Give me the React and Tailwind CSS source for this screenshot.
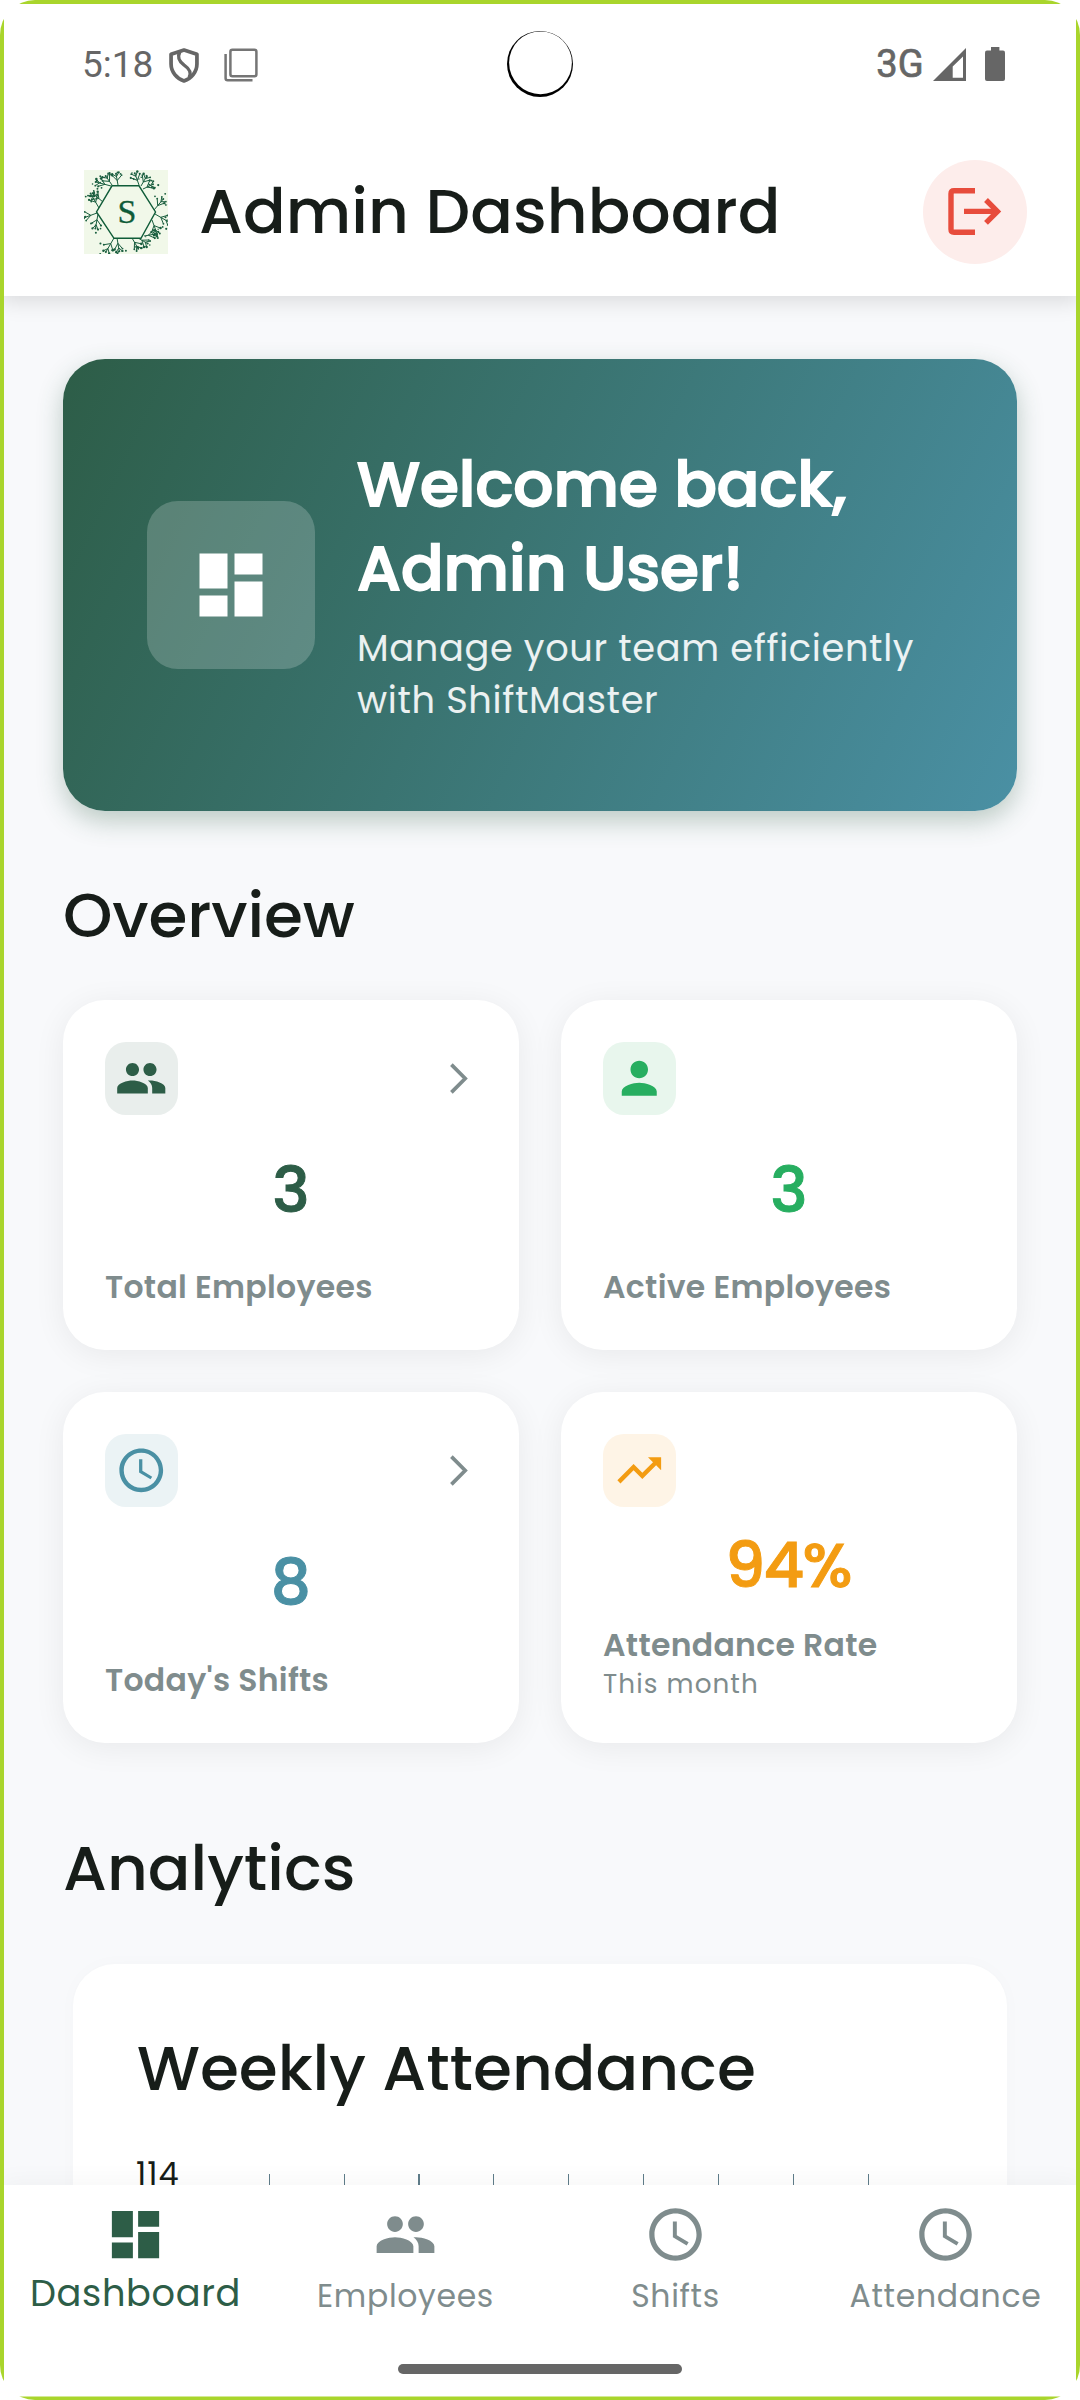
import React from 'react';
import { MdDashboard, MdPeople, MdPerson, MdTrendingUp, MdAccessTime } from 'react-icons/md';

function ShieldIcon() {
  return (
    <svg width="30" height="35" viewBox="0 0 29 35" preserveAspectRatio="none" fill="none" stroke="#666666" strokeWidth="3.6">
      <path d="M14.5 2 L27 6.3 V16 C27 24 21.5 30.5 14.5 33 C7.5 30.5 2 24 2 16 V6.3 Z" strokeLinejoin="round" />
      <path d="M10.5 3.5 C7.5 10 10 13.5 14.5 17 C20 21 22 24.5 19.5 29.5" strokeWidth="3.4" />
    </svg>
  );
}

function StackIcon() {
  return (
    <svg width="34" height="34" viewBox="0 0 34 34" fill="none" stroke="#757575" strokeWidth="2.5">
      <rect x="6.4" y="1.8" width="26" height="26.4" rx="2" />
      <path d="M1.6 6 V30.2 Q1.6 32.2 3.6 32.2 H28.5" />
    </svg>
  );
}

function SignalIcon() {
  return (
    <svg width="33" height="33" viewBox="0 0 33 33" fill="#666666" fillRule="evenodd">
      <path d="M0 33 L33 0 V33 Z M19.7 18.5 V29.7 H30 V8.4 Z" />
    </svg>
  );
}

function BatteryIcon() {
  return (
    <svg width="20" height="34" viewBox="0 0 20 34" fill="#666666">
      <rect x="6" y="0" width="8.4" height="5" />
      <rect x="0" y="3.4" width="20" height="30.6" rx="2" />
    </svg>
  );
}

function LogoutIcon() {
  return (
    <svg width="54" height="48" viewBox="0 0 54 48" fill="none" stroke="#E74C3C" strokeWidth="5.4">
      <path d="M27 2.7 H6 Q3 2.7 3 5.7 V41.3 Q3 44.3 6 44.3 H27" />
      <path d="M16 23.4 H49" />
      <path d="M38 12 L49.4 23.4 L38 34.8" />
    </svg>
  );
}

function ChevronIcon() {
  return (
    <svg className="mr-[9px]" width="18" height="31" viewBox="0 0 18 31" fill="none" stroke="#7F8C8D" strokeWidth="3.7">
      <path d="M1.4 1.6 L15.2 15.5 L1.4 29.4" />
    </svg>
  );
}

/* Leafy wreath around the hexagon of the brand mark. */
function wreath() {
  const twigs = [];
  const dots = [];
  let seed = 7;
  const rand = () => {
    seed = (seed * 16807) % 2147483647;
    return seed / 2147483647;
  };
  const roots = [
    [28, 15, -125], [27, 16, -165], [34, 15, -100], [55, 15, -110], [57, 16, -60], [59, 19, -25],
    [70, 40, -50], [71, 44, 30], [68, 50, 70], [60, 66, -10], [54, 68, 30],
    [48, 68, 60], [33, 68, 80], [30, 68, 120], [14, 44, 100],
    [13, 43, 160], [15, 38, -120], [19, 32, -140],
  ];
  roots.forEach(([x, y, deg]) => {
    const a = (deg * Math.PI) / 180;
    const len = 11 + rand() * 6;
    const ex = x + Math.cos(a) * len;
    const ey = y + Math.sin(a) * len;
    twigs.push(`M${x} ${y}L${ex.toFixed(1)} ${ey.toFixed(1)}`);
    dots.push([ex, ey, 1]);
    [0.4, 0.75].forEach((t, i) => {
      [-1, 1].forEach((side) => {
        const b = a + side * (0.5 + rand() * 0.4);
        const l = 7 - i * 2;
        const sx = x + Math.cos(a) * len * t;
        const sy = y + Math.sin(a) * len * t;
        const tx = sx + Math.cos(b) * l;
        const ty = sy + Math.sin(b) * l;
        twigs.push(`M${sx.toFixed(1)} ${sy.toFixed(1)}L${tx.toFixed(1)} ${ty.toFixed(1)}`);
        dots.push([tx, ty, 0.8 + rand() * 0.5]);
        dots.push([tx + rand() * 8 - 4, ty + rand() * 8 - 4, 0.6 + rand() * 0.5]);
      });
    });
  });
  return { twigs: twigs.join(''), dots };
}
const WREATH = wreath();

function BrandMark() {
  return (
    <svg width="84" height="84" viewBox="0 0 84 84">
      <rect width="84" height="84" fill="#F1F8E9" />
      <path d={WREATH.twigs} stroke="#1A5E3F" strokeWidth="1" fill="none" />
      {WREATH.dots.map(([x, y, r], i) => (
        <circle key={i} cx={x} cy={y} r={r} fill="#1A5E3F" />
      ))}
      <path d="M28 15.8 H55 L71.5 42 L57 68.3 H30 L12.5 42 Z" fill="#F1F8E9" stroke="#0F5C38" strokeWidth="1.4" />
      <text x="43" y="53" textAnchor="middle" fontSize="34" fill="#0F5C38" className="font-['Liberation_Serif',serif]" stroke="#0F5C38" strokeWidth="0.3">S</text>
    </svg>
  );
}

function StatusBar() {
  return (
    <div className="relative flex h-[128px] shrink-0 items-center justify-between pr-[75px] pl-[82px] text-[#666666]">
      <div className="flex items-center pt-px font-['Roboto',sans-serif]">
        <span className="text-[37px] leading-[43px]">5:18</span>
        <span className="ml-[16px] pt-[2px]"><ShieldIcon /></span>
        <span className="ml-[25px]"><StackIcon /></span>
      </div>
      <div className="flex items-center font-['Roboto',sans-serif]">
        <span className="text-[38px] leading-[43px] tracking-[0.3px] [-webkit-text-stroke:0.7px_#666666]">3G</span>
        <span className="ml-[9px]"><SignalIcon /></span>
        <span className="ml-[19px]"><BatteryIcon /></span>
      </div>
      <svg className="absolute top-[31px] left-[507px]" width="66" height="66" viewBox="0 0 66 66">
        <circle cx="33" cy="33" r="33" fill="#000000" />
        <circle cx="33.5" cy="31.8" r="31.4" fill="#ffffff" />
      </svg>
    </div>
  );
}

function Header() {
  return (
    <header className="flex h-[168px] shrink-0 items-center pr-[53px] pl-[84px]">
      <BrandMark />
      <h1 className="ml-[31px] flex-1 pb-[2px] text-[63px] leading-[84px] font-medium tracking-[0.08px] text-[#171D19]">Admin Dashboard</h1>
      <button className="flex size-[104px] items-center justify-center rounded-full bg-[#FDEDEB]">
        <LogoutIcon />
      </button>
    </header>
  );
}

function Hero() {
  return (
    <section className="flex h-[452px] items-center rounded-[42px] bg-[linear-gradient(115.35deg,#2D5D47,#4A90A4)] pl-[84px] shadow-[0_10px_26px_rgba(47,93,71,0.3)]">
      <div className="flex size-[168px] shrink-0 items-center justify-center rounded-[31px] bg-white/20 text-[84px] text-white">
        <MdDashboard />
      </div>
      <div className="mb-[2px] ml-[42px]">
        <h2 className="text-[63px] leading-[84px] font-medium text-white [-webkit-text-stroke:1.8px_white]">Welcome back,<br />Admin User!</h2>
        <p className="mt-[12px] text-[36.75px] leading-[52px] tracking-[0.65px] text-white/90">Manage your team efficiently<br />with ShiftMaster</p>
      </div>
    </section>
  );
}

const STATS = [
  { icon: MdPeople, value: '3', label: 'Total Employees', tone: 'text-[#2D5D47]', tint: 'bg-[#E9EEEC]', link: true },
  { icon: MdPerson, value: '3', label: 'Active Employees', tone: 'text-[#27AE60]', tint: 'bg-[#E8F6ED]' },
  { icon: MdAccessTime, value: '8', label: "Today's Shifts", tone: 'text-[#4A90A4]', tint: 'bg-[#EBF3F5]', link: true },
  { icon: MdTrendingUp, value: '94%', label: 'Attendance Rate', note: 'This month', tone: 'text-[#F39C12]', tint: 'bg-[#FEF4E6]' },
];

function StatCard({ icon: Icon, value, label, note, tone, tint, link }) {
  return (
    <article className="flex flex-col justify-between rounded-[42px] bg-white p-[42px] shadow-[0_5px_32px_rgba(0,0,0,0.065)]">
      <div className="flex items-center justify-between">
        <div className={`flex size-[73px] items-center justify-center rounded-[21px] text-[52.5px] ${tint} ${tone}`}>
          <Icon />
        </div>
        {link && <ChevronIcon />}
      </div>
      <div className={`mb-[2px] pr-[2px] text-center text-[63px] leading-[84px] font-medium tracking-[-1.8px] [-webkit-text-stroke:1px_currentColor] ${tone}`}>{value}</div>
      <div className="text-[#7F8C8D]">
        <div className="text-[31.5px] leading-[42px] font-semibold tracking-[0.3px]">{label}</div>
        {note && <div className="text-[26.25px] leading-[35px] tracking-[1.07px]">{note}</div>}
      </div>
    </article>
  );
}

const GRID_LINES = [69, 144, 218, 293, 368, 443, 518, 593, 668];

function Analytics() {
  return (
    <section className="mx-[10px] mt-[54px] h-[700px] rounded-[42px] bg-white px-[63px] pt-[62px] shadow-[0_0_20px_rgba(0,0,0,0.02)]">
      <h3 className="ml-px text-[63px] leading-[84px] font-medium text-[#171D19]">Weekly Attendance</h3>
      <div className="mt-[41px] flex">
        <span className="w-[64px] pt-px text-[32px] leading-[44px] tracking-[1px] text-[#171D19]">114</span>
        <svg className="mt-[23px]" width="720" height="400" viewBox="0 0 720 400" fill="#5F7D8A">
          {GRID_LINES.map((x) => (
            <rect key={x} x={x} y="0" width={x === 218 ? 2 : 1} height="400" />
          ))}
        </svg>
      </div>
    </section>
  );
}

const TABS = [
  { icon: MdDashboard, label: 'Dashboard', active: true },
  { icon: MdPeople, label: 'Employees' },
  { icon: MdAccessTime, label: 'Shifts' },
  { icon: MdAccessTime, label: 'Attendance' },
];

function BottomNav() {
  return (
    <nav className="relative flex h-[215px] shrink-0 flex-col items-center bg-white shadow-[0_-3px_24px_rgba(0,0,0,0.04)]">
      <div className="grid h-[179px] w-full grid-cols-4 pt-[18px]">
        {TABS.map(({ icon: Icon, label, active }) => (
          <div key={label} className={`flex flex-col items-center text-[63px] ${active ? 'text-[#2D5D47]' : 'text-[#7F8C8D]'}`}>
            <Icon />
            <span className={active ? 'mt-px pl-px text-[36.75px] leading-[52px] tracking-[0.65px]' : 'mt-[8px] pl-px text-[31.5px] leading-[44px] tracking-[0.65px]'}>{label}</span>
          </div>
        ))}
      </div>
      <div className="h-[10px] w-[284px] rounded-full bg-[#666666]" />
    </nav>
  );
}

/* Green edge that tapers away into white at the four corners. */
function ScreenFrame() {
  return (
    <svg className="pointer-events-none absolute inset-0 z-20" width="1080" height="2400" viewBox="0 0 1080 2400">
      <clipPath id="screen">
        <rect width="1080" height="2400" rx="35" />
      </clipPath>
      <path clipPath="url(#screen)" fill="#A9D52C" fillRule="evenodd" d="M0 0 H1080 V2400 H0 Z M4 4 V2396.5 H1076 V4 Z" />
    </svg>
  );
}

export default function App() {
  return (
    <div className="relative flex h-[2400px] w-[1080px] flex-col overflow-hidden bg-white font-['Poppins','Inter',sans-serif]">
      <div className="relative z-10 shrink-0 bg-white shadow-[0_5px_21px_rgba(0,0,0,0.13)]">
        <StatusBar />
        <Header />
      </div>
      <main className="min-h-0 flex-1 overflow-hidden bg-[#F8F9FB] px-[63px] pt-[63px]">
        <Hero />
        <h2 className="mt-[62px] text-[63px] leading-[84px] font-medium tracking-[-0.1px] text-[#171D19]">Overview</h2>
        <div className="mt-[43px] grid grid-cols-2 grid-rows-[350px_351px] gap-[42px]">
          {STATS.map((s) => (
            <StatCard key={s.label} {...s} />
          ))}
        </div>
        <h2 className="mt-[83px] text-[63px] leading-[84px] font-medium text-[#171D19]">Analytics</h2>
        <Analytics />
      </main>
      <BottomNav />
      <ScreenFrame />
    </div>
  );
}
